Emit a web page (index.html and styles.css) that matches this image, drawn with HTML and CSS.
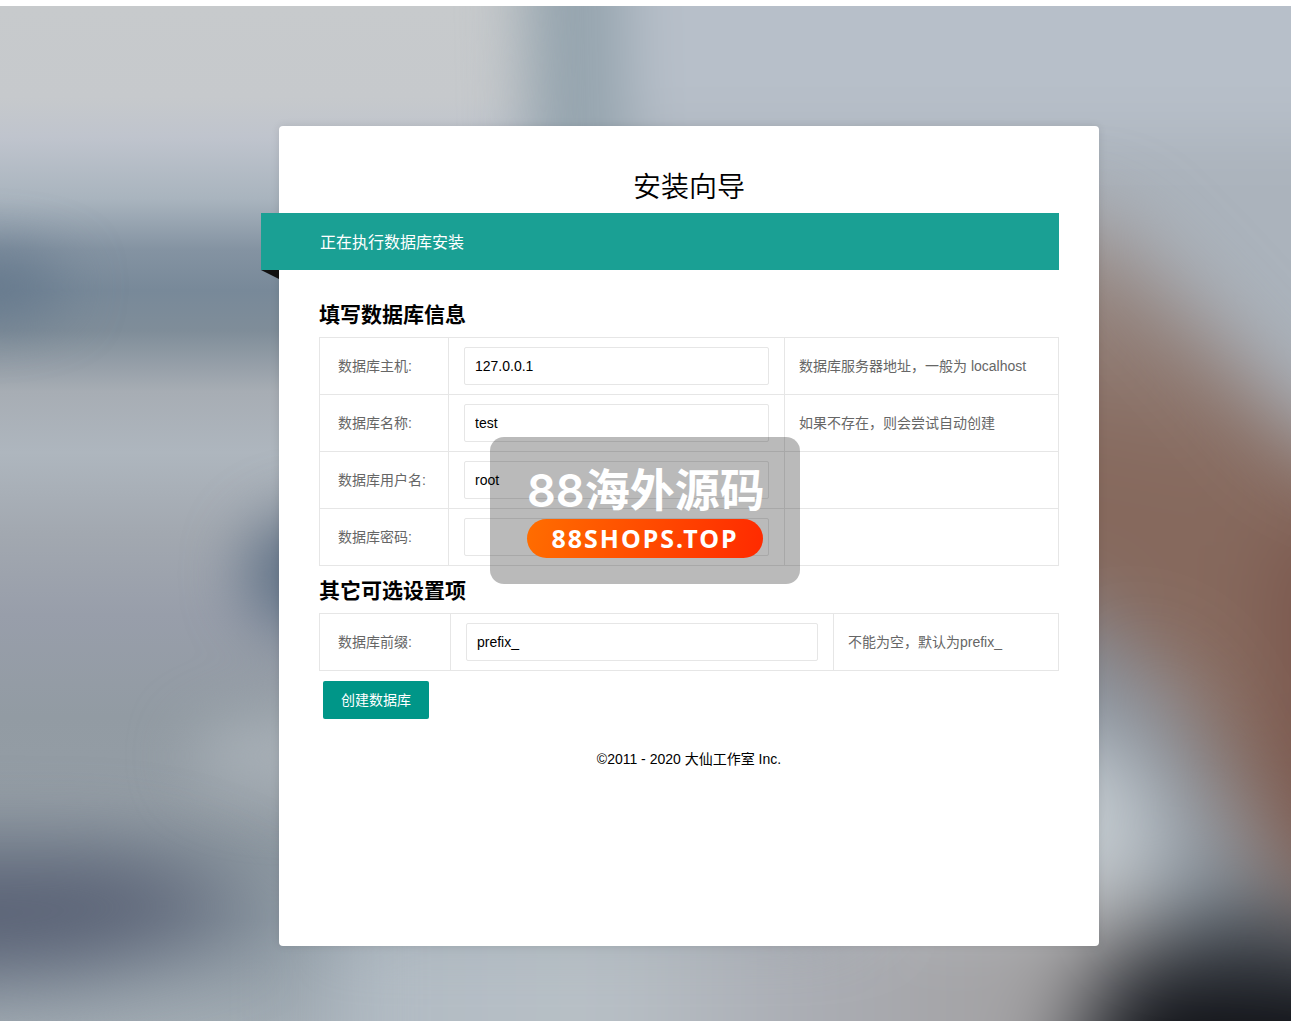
FILE: index.html
```html
<!DOCTYPE html>
<html lang="zh-CN">
<head>
  <meta charset="utf-8">
  <meta name="viewport" content="width=device-width, initial-scale=1">
  <title>安装向导</title>
  <link rel="stylesheet" href="styles.css">
</head>
<body>
  <div class="page">
    <svg class="backdrop" viewBox="0 0 1291 1015" preserveAspectRatio="none" aria-hidden="true">
      <defs>
        <linearGradient id="base" x1="0" y1="0" x2="0" y2="1">
          <stop offset="0" stop-color="#c7cacc"/>
          <stop offset=".09" stop-color="#c6c9cc"/>
          <stop offset=".13" stop-color="#bfc4cd"/>
          <stop offset=".19" stop-color="#a9b4be"/>
          <stop offset=".24" stop-color="#8493a2"/>
          <stop offset=".28" stop-color="#788999"/>
          <stop offset=".32" stop-color="#7f8d99"/>
          <stop offset=".38" stop-color="#a7adb4"/>
          <stop offset=".44" stop-color="#aeb6be"/>
          <stop offset=".52" stop-color="#a2a8b0"/>
          <stop offset=".6" stop-color="#989eaa"/>
          <stop offset=".7" stop-color="#929ba3"/>
          <stop offset=".78" stop-color="#949da5"/>
          <stop offset=".84" stop-color="#8d98a1"/>
          <stop offset=".9" stop-color="#8c98a2"/>
          <stop offset="1" stop-color="#a0aab2"/>
        </linearGradient>
        <linearGradient id="floor" gradientUnits="userSpaceOnUse" x1="330" y1="0" x2="1100" y2="0">
          <stop offset="0" stop-color="#b0bac3"/>
          <stop offset=".35" stop-color="#b8c0c6"/>
          <stop offset=".6" stop-color="#abaeb5"/>
          <stop offset="1" stop-color="#a09d9d"/>
        </linearGradient>
        <linearGradient id="brown" gradientUnits="userSpaceOnUse" x1="1100" y1="230" x2="1060" y2="440">
          <stop offset="0" stop-color="#9a8f8b"/>
          <stop offset="1" stop-color="#86695d"/>
        </linearGradient>
        <filter id="soft" filterUnits="userSpaceOnUse" color-interpolation-filters="sRGB" x="-300" y="-300" width="1900" height="1700"><feGaussianBlur stdDeviation="30"/></filter>
        <filter id="softer" filterUnits="userSpaceOnUse" color-interpolation-filters="sRGB" x="-300" y="-300" width="1900" height="1700"><feGaussianBlur stdDeviation="42"/></filter>
      </defs>
      <rect width="1291" height="1015" fill="url(#base)"/>
      <g filter="url(#soft)">
        <path d="M560-200H1700V150H560z" fill="#b7bfc9"/>
        <path d="M560 130H1700V700H560z" fill="#abb3bc"/>
        <path d="M520-200H620L630 220H530z" fill="#95a4ae"/>
        <ellipse cx="-10" cy="280" rx="75" ry="28" fill="#61758a"/>
        <ellipse cx="320" cy="568" rx="75" ry="60" fill="#5f7186"/>
        <ellipse cx="290" cy="750" rx="100" ry="40" fill="#a8b0b7"/>
      </g>
      <g filter="url(#softer)">
        <path d="M-200 850H110Q220 870 260 910L80 960-200 975z" fill="#575f73"/>
        <path d="M330 900H1180V1200H330z" fill="url(#floor)"/>
        <path d="M850 215H1100Q1190 300 1300 430L1500 520V900H1290L1180 690 1100 620 850 580z" fill="url(#brown)"/>
        <path d="M1270 530H1500V860H1290z" fill="#7a564c"/>
        <path d="M850 600H1090Q1120 640 1165 710T1225 880H850z" fill="#87909b"/>
        <path d="M850 730H1110Q1165 790 1170 850L1130 900H850z" fill="#c4cbd0"/>
        <path d="M1060 1080L1110 950 1240 905 1330 930 1500 960V1300H1030z" fill="#30343b"/>
        <path d="M1130 1000H1600V1300H1080z" fill="#0b0c10"/>
      </g>
    </svg>

    <main class="card">
      <h1 class="card-title">安装向导</h1>
      <p class="ribbon">正在执行数据库安装</p>

      <form class="form">
        <h2 class="section-title">填写数据库信息</h2>
        <table class="grid">
          <colgroup><col class="col-label"><col><col class="col-hint"></colgroup>
          <tbody>
            <tr>
              <td><label for="host">数据库主机:</label></td>
              <td><input class="field" id="host" type="text" value="127.0.0.1"></td>
              <td>数据库服务器地址，一般为 localhost</td>
            </tr>
            <tr>
              <td><label for="name">数据库名称:</label></td>
              <td><input class="field" id="name" type="text" value="test"></td>
              <td>如果不存在，则会尝试自动创建</td>
            </tr>
            <tr>
              <td><label for="user">数据库用户名:</label></td>
              <td><input class="field" id="user" type="text" value="root"></td>
              <td></td>
            </tr>
            <tr>
              <td><label for="password">数据库密码:</label></td>
              <td><input class="field" id="password" type="password"></td>
              <td></td>
            </tr>
          </tbody>
        </table>

        <h2 class="section-title">其它可选设置项</h2>
        <table class="grid">
          <colgroup><col class="col-label-wide"><col><col class="col-hint-narrow"></colgroup>
          <tbody>
            <tr>
              <td><label for="prefix">数据库前缀:</label></td>
              <td><input class="field" id="prefix" type="text" value="prefix_"></td>
              <td>不能为空，默认为prefix_</td>
            </tr>
          </tbody>
        </table>
        <button class="submit" type="button">创建数据库</button>
      </form>

      <footer class="footer">©2011 - 2020 大仙工作室 Inc.</footer>

      <div class="stamp">
        <div class="stamp-name"><span class="stamp-digits">88</span>海外源码</div>
        <div class="stamp-site">88SHOPS.TOP</div>
      </div>
    </main>
  </div>
</body>
</html>
```

FILE: styles.css
```css
* {
  box-sizing: border-box;
}

body {
  margin: 0;
  padding-top: 6px;
  background: #fff;
  color: #000;
  font: 14px/24px "Liberation Sans", "Noto Sans CJK SC", sans-serif;
}

.page {
  position: relative;
  display: flex;
  justify-content: center;
  align-items: flex-start;
  min-height: calc(100vh - 6px);
  padding: 120px 0 75px 87px;
  overflow: hidden;
}

.backdrop {
  position: absolute;
  inset: 0;
  width: 100%;
  height: 100%;
}

.card {
  position: relative;
  width: 100%;
  max-width: 820px;
  min-height: 820px;
  padding: 42px 40px 40px;
  border-radius: 4px;
  background: #fff;
  box-shadow: 0 0 8px rgba(0, 0, 0, .1);
}

.card-title {
  margin: 0;
  font-size: 28px;
  line-height: 40px;
  font-weight: 350;
  text-align: center;
}

.ribbon {
  position: relative;
  margin: 5px 0 24px -58px;
  padding: 2px 59px 0;
  background: #1aa094;
  color: #fff;
  font-size: 16px;
  line-height: 55px;
}

.ribbon::after {
  content: "";
  position: absolute;
  top: 100%;
  left: 0;
  border-top: 9px solid #111;
  border-left: 18px solid transparent;
}

.section-title {
  margin: 0;
  padding: 5px 0 6px;
  font-size: 21px;
  line-height: 32px;
  font-weight: 700;
}

.grid {
  width: 100%;
  margin-bottom: 4px;
  border-collapse: collapse;
  table-layout: fixed;
  color: #666;
}

.grid td {
  height: 57px;
  padding: 0 15px 0 14px;
  border: 1px solid #e6e6e6;
}

.grid td:first-child {
  padding: 0 0 0 18px;
}

.grid td:nth-child(2) {
  padding: 0 15px;
}

.col-label {
  width: 129px;
}

.col-hint {
  width: 274px;
}

.col-label-wide {
  width: 131px;
}

.col-hint-narrow {
  width: 225px;
}

.field {
  display: block;
  width: 100%;
  height: 38px;
  padding: 0 10px;
  border: 1px solid #e6e6e6;
  border-radius: 2px;
  background: #fff;
  color: #000;
  font: inherit;
}

.submit {
  display: block;
  height: 38px;
  margin: 10px 4px 0;
  padding: 0 18px;
  border: 0;
  border-radius: 2px;
  background: #009688;
  color: #fff;
  font: inherit;
}

.footer {
  margin-top: 28px;
  text-align: center;
}

.stamp {
  position: absolute;
  top: 311px;
  left: 211px;
  width: 310px;
  height: 147px;
  padding: 26px 37px;
  border-radius: 14px;
  background: rgba(0, 0, 0, .27);
  color: #fff;
}

.stamp-name {
  font: 700 45px/50px "Noto Sans CJK SC", sans-serif;
  white-space: nowrap;
}

.stamp-digits {
  font-family: Inter, sans-serif;
  font-weight: 600;
}

.stamp-site {
  margin-top: 3px;
  border-radius: 20px;
  background: linear-gradient(100deg, #ff6d00, #ff2a00);
  font: 700 25px/39px "Noto Sans", sans-serif;
  letter-spacing: 2px;
  text-align: center;
}
```
